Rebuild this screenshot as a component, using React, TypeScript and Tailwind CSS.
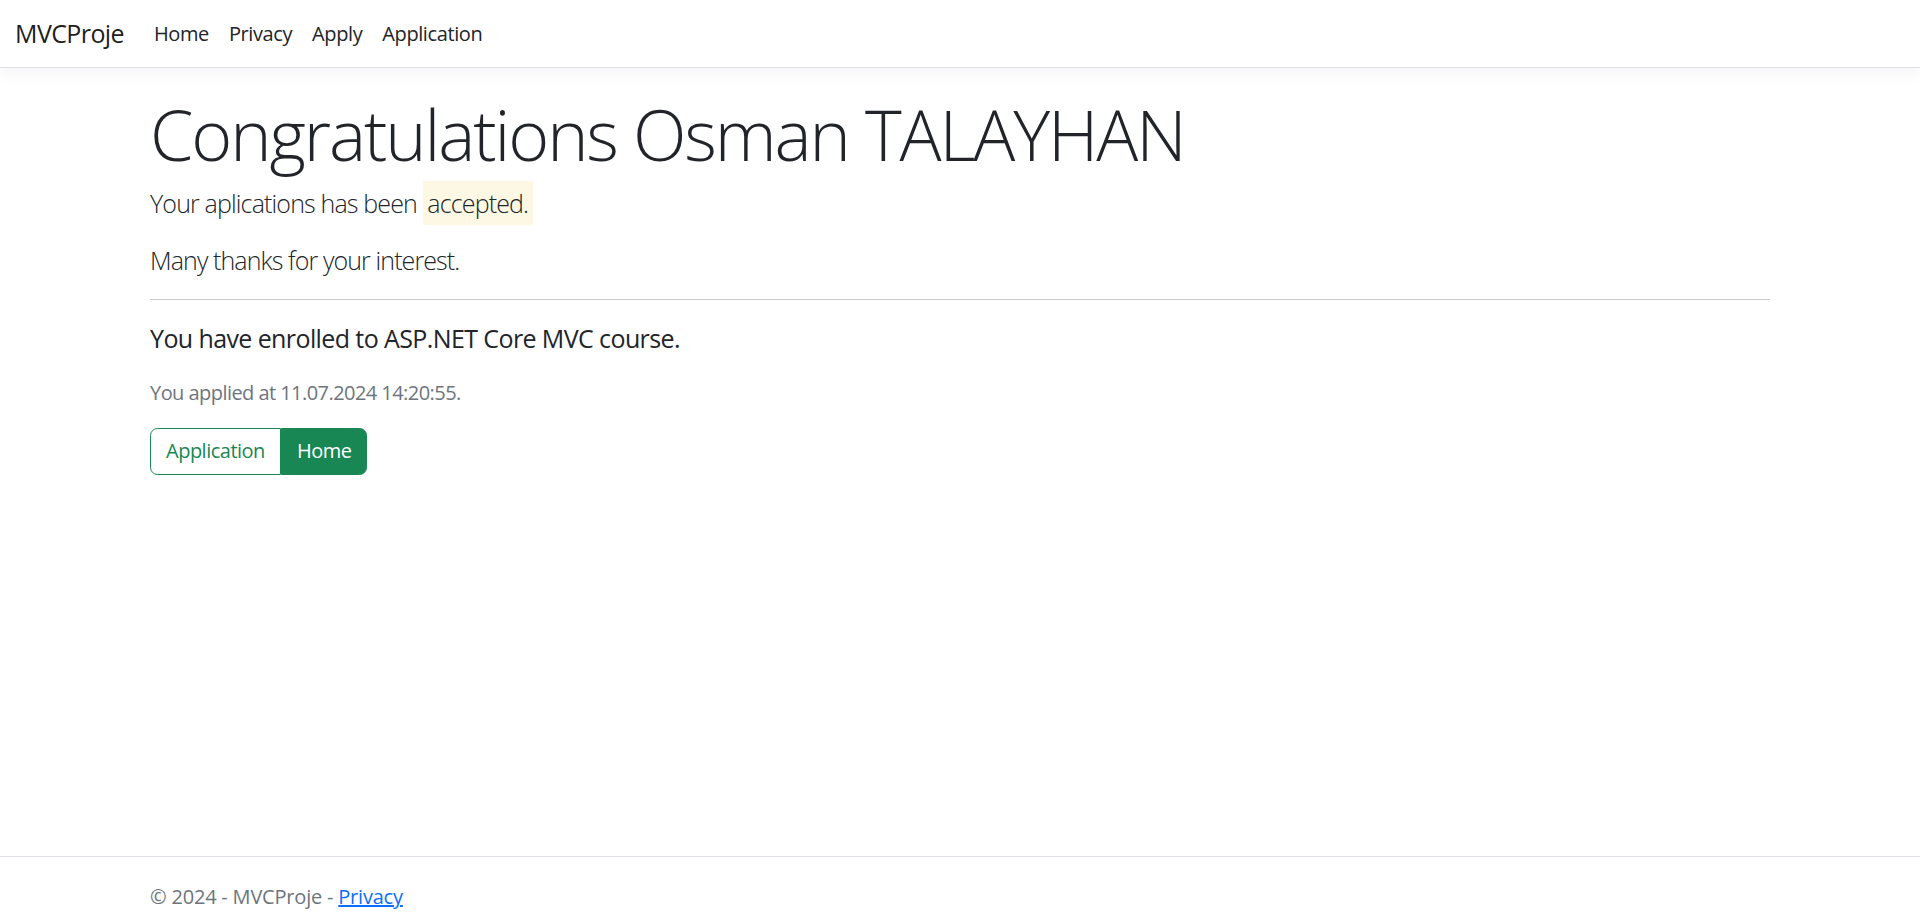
export default function App() {
  return (
    <div className="bg-white text-[#212529] font-['Segoe_UI','Open_Sans',sans-serif] text-[20px] leading-[1.5]">
      <div className="min-h-[856px]">
        {/* Navbar */}
        <header className="h-[68px] border-b border-[#dee2e6] bg-white shadow-[0_5px_15px_rgba(0,0,0,0.05)]">
          <nav className="flex h-full items-center px-[15px]">
            <a href="#" className="mr-[20px] text-[25px] tracking-[-0.6px] text-black/90 leading-[1.5]">
              MVCProje
            </a>
            <ul className="flex items-center tracking-[-0.4px]">
              <li>
                <a href="#" className="block px-[10px] text-[#212529]">Home</a>
              </li>
              <li>
                <a href="#" className="block px-[10px] text-[#212529]">Privacy</a>
              </li>
              <li>
                <a href="#" className="block px-[10px] text-[#212529]">Apply</a>
              </li>
              <li>
                <a href="#" className="block px-[10px] text-[#212529]">Application</a>
              </li>
            </ul>
          </nav>
        </header>

        {/* Main */}
        <main className="mx-auto mt-[24px] w-[1650px] px-[15px] pb-[20px]">
          <h1 className="mb-[9px] text-[70px] font-light leading-[1.2] tracking-[-2.1px]">
            Congratulations Osman TALAYHAN
          </h1>
          <p className="mb-[19px] text-[25px] font-light tracking-[-0.85px]">
            Your aplications has been <mark className="bg-[#fcf8e3] p-[0.1875em] text-[#212529]">accepted.</mark>
          </p>
          <p className="mb-[17px] text-[25px] font-light tracking-[-0.9px]">Many thanks for your interest.</p>
          <hr className="my-[20px] border-t border-[#c8c9ca]" />
          <p className="mb-[20px] text-[25px] tracking-[-0.6px]">You have enrolled to ASP.NET Core MVC course.</p>
          <p className="mb-[20px] text-[#6c757d] tracking-[-0.55px]">You applied at 11.07.2024 14:20:55.</p>
          <div className="inline-flex tracking-[-0.5px]">
            <a
              href="#"
              className="rounded-l-[7.5px] border border-[#198754] px-[15px] py-[7.5px] text-[#198754]"
            >
              Application
            </a>
            <a
              href="#"
              className="rounded-r-[7.5px] border border-[#198754] bg-[#198754] px-[15px] py-[7.5px] text-white"
            >
              Home
            </a>
          </div>
        </main>
      </div>

      {/* Footer */}
      <footer className="h-[75px] whitespace-nowrap border-t border-[#dee2e6] pt-[3px] leading-[74px] text-[#6c757d]">
        <div className="mx-auto w-[1650px] px-[15px] tracking-[-0.2px]">
          © 2024 - MVCProje - <a href="#" className="text-[#0d6efd] underline">Privacy</a>
        </div>
      </footer>
    </div>
  );
}
